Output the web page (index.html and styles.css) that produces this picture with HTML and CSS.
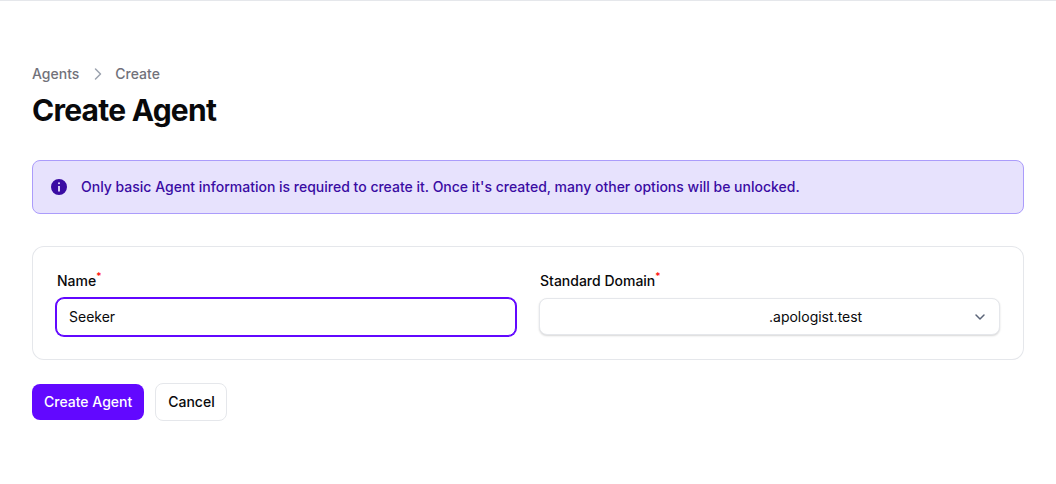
FILE: index.html
```html
<!DOCTYPE html>
<html lang="en">
<head>
<meta charset="utf-8">
<title>Create Agent</title>
<link rel="stylesheet" href="styles.css">
</head>
<body>
<main class="page">
  <nav class="crumbs">
    <a>Agents</a>
    <svg class="crumb-sep" width="20" height="20" viewBox="0 0 20 20" fill="none"><path d="M8.5 5l5 5-5 5" stroke="#9ca3af" stroke-width="1.5" stroke-linecap="round" stroke-linejoin="round"/></svg>
    <a>Create</a>
  </nav>
  <h1 class="title">Create Agent</h1>
  <div class="alert">
    <svg class="alert-icon" width="20" height="20" viewBox="0 0 20 20"><path fill="#3a0ca3" fill-rule="evenodd" d="M18 10a8 8 0 11-16 0 8 8 0 0116 0zM10 7.2a1 1 0 100-2 1 1 0 000 2zM9.1 9h1.8v5.5H9.1V9z"/></svg>
    <span>Only basic Agent information is required to create it. Once it's created, many other options will be unlocked.</span>
  </div>
  <section class="card">
    <div class="field">
      <label class="label label-name">Name<sup class="req">*</sup></label>
      <div class="input input-focus">Seeker</div>
    </div>
    <div class="field">
      <label class="label">Standard Domain<sup class="req">*</sup></label>
      <div class="input select">
        <span class="select-value">.apologist.test</span>
        <svg class="chev" width="20" height="20" viewBox="0 0 20 20" fill="none"><path d="M6 8l4 4 4-4" stroke="#5b6478" stroke-width="1.5" stroke-linecap="round" stroke-linejoin="round"/></svg>
      </div>
    </div>
  </section>
  <div class="actions">
    <button class="btn btn-primary">Create Agent</button>
    <button class="btn btn-plain">Cancel</button>
  </div>
</main>
</body>
</html>
```
FILE: styles.css
```css
* { box-sizing: border-box; }
html, body { margin: 0; padding: 0; }
body {
  background: #fff;
  color: #09090b;
  font-family: Inter, "Liberation Sans", sans-serif;
  font-size: 14px;
  line-height: 20px;
  height: 484px;
  overflow: hidden;
  border-top: 1px solid #e5e7eb;
}
.page { padding: 63px 32px 0; }
.crumbs {
  display: flex;
  align-items: center;
  gap: 8px;
  color: #71717a;
  font-weight: 500;
  height: 20px;
}
.crumb-sep { display: block; }
.title {
  margin: 8px 0 0;
  font-size: 30px;
  line-height: 36px;
  font-weight: 700;
  letter-spacing: -0.75px;
}
.alert {
  margin-top: 32px;
  height: 54px;
  display: flex;
  align-items: center;
  gap: 12px;
  padding: 0 16px;
  background: #e7e2fd;
  border: 1px solid #ab9cfb;
  border-radius: 8px;
  color: #3a0ca3;
  font-weight: 500;
}
.alert-icon { flex: none; }
.card {
  margin-top: 32px;
  height: 114px;
  display: grid;
  grid-template-columns: 1fr 1fr;
  gap: 24px;
  padding: 24px;
  box-shadow: inset 0 0 0 1px #e5e7eb;
  border-radius: 12px;
  background: #fff;
}
.field { display: flex; flex-direction: column; gap: 6px; }
.label { font-weight: 500; height: 22px; line-height: 22px; white-space: nowrap; }
.label-name { padding-left: 1px; }
.req { color: #f00; font-size: 10px; line-height: 0; }
.input {
  height: 38px;
  display: flex;
  align-items: center;
  padding: 0 12px;
  border-radius: 8px;
  background: #fff;
}
.input-focus { border: 1px solid #6208ff; box-shadow: 0 0 0 1px #6208ff; }
.select {
  position: relative;
  height: 37px;
  margin-left: -1px;
  border: 1px solid #e5e7eb;
  box-shadow: 0 1px 2px rgba(0,0,0,.16);
  padding-left: 229px;
}
.chev { position: absolute; right: 9px; top: 8px; }
.actions { margin-top: 23px; display: flex; align-items: center; gap: 11px; }
.btn {
  font: 500 14px/20px Inter, "Liberation Sans", sans-serif;
  border-radius: 8px;
  padding: 0 12px;
  cursor: pointer;
}
.btn-primary { height: 36px; background: #6208ff; color: #fff; border: 0; }
.btn-plain { height: 38px; background: #fff; color: #09090b; border: 1px solid #e5e7eb; padding-right: 11px; }
```
